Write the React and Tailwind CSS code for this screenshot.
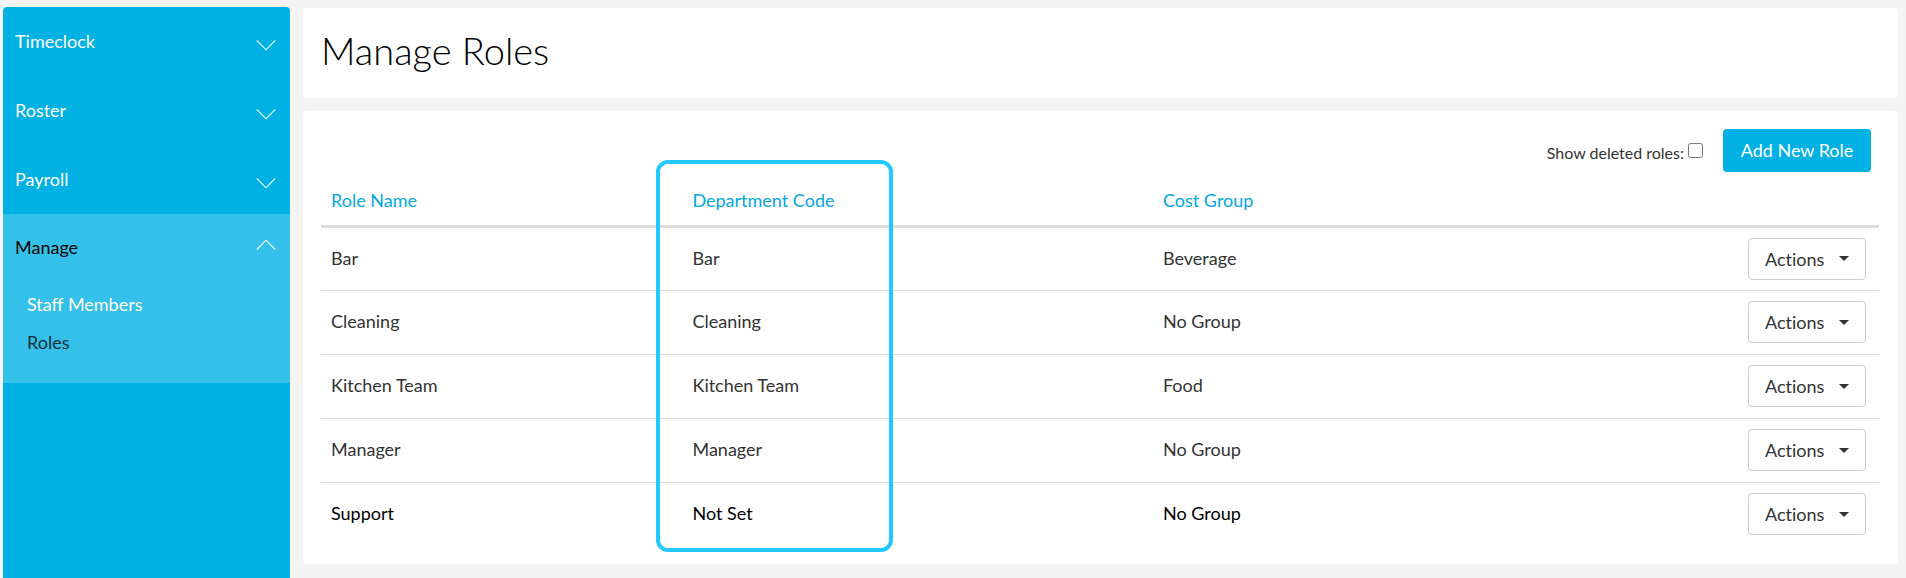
import { useState } from 'react'

const menu = ['Timeclock', 'Roster', 'Payroll']

const roles = [
  { name: 'Bar', code: 'Bar', group: 'Beverage' },
  { name: 'Cleaning', code: 'Cleaning', group: 'No Group' },
  { name: 'Kitchen Team', code: 'Kitchen Team', group: 'Food' },
  { name: 'Manager', code: 'Manager', group: 'No Group' },
  { name: 'Support', code: 'Not Set', group: 'No Group', isNew: true },
]

function Chevron({ up }) {
  return (
    <svg width="20" height="12" viewBox="0 0 20 12" fill="none" stroke="currentColor" strokeWidth="1.1" className="text-white">
      <path d={up ? 'M0.7 10.7L10 1.2l9.3 9.5' : 'M0.7 1.3L10 10.8l9.3-9.5'} />
    </svg>
  )
}

function Sidebar() {
  return (
    <nav className="w-[287px] shrink-0 rounded-t bg-[#02b1e4] text-lg text-white">
      {menu.map((item) => (
        <button key={item} type="button" className="flex h-[69px] w-full items-center justify-between pb-0.5 pl-3 pr-3.5 text-left">
          {item}
          <span className="pt-2">
            <Chevron />
          </span>
        </button>
      ))}

      {/* Open section */}
      <div className="bg-[#34c0e8] pb-[22px]">
        <button type="button" className="flex h-[69px] w-full items-center justify-between pb-1 pl-3 pr-3.5 text-left text-black">
          Manage
          <span className="pb-1">
            <Chevron up />
          </span>
        </button>
        <ul className="pl-6 pt-0.5 leading-[38px]">
          <li>
            <a href="#staff">Staff Members</a>
          </li>
          <li>
            <a href="#roles" className="text-[#12303c]">Roles</a>
          </li>
        </ul>
      </div>
    </nav>
  )
}

export default function App() {
  const [showDeleted, setShowDeleted] = useState(false)

  return (
    <div className="flex min-h-screen gap-[13px] bg-[#f4f4f4] pl-[3px] pr-2 pt-[7px] font-['Lato',sans-serif] text-[#333]">
      <Sidebar />

      <main className="min-w-0 flex-1 pt-px">
        {/* Header */}
        <header className="mb-[13px] h-[90px] rounded bg-white px-[18px] pt-3.5">
          <h1 className="text-[38px] leading-[56px] font-light text-black">Manage Roles</h1>
        </header>

        {/* Roles */}
        <section className="rounded bg-white pb-[18px] pl-[18px] pr-[19px] pt-[18px]">
          <div className="flex items-center justify-end gap-5 pr-2">
            <div className="flex items-center gap-1">
              <label htmlFor="show-deleted" className="pt-1 text-base">Show deleted roles:</label>
              <input
                id="show-deleted"
                type="checkbox"
                checked={showDeleted}
                onChange={(e) => setShowDeleted(e.target.checked)}
                className="size-[15px]"
              />
            </div>
            <button type="button" className="h-[43px] w-[148px] rounded bg-[#02b1e4] pb-0.5 text-lg text-white">
              Add New Role
            </button>
          </div>

          <div className="relative">
            <table className="w-full table-fixed text-left text-lg">
              <colgroup>
                <col className="w-[23.2%]" />
                <col className="w-[30.2%]" />
                <col />
                <col className="w-[150px]" />
              </colgroup>
              <thead>
                <tr className="h-[54px] border-b-3 border-[#ddd] text-[#02a8e0]">
                  <th className="px-2.5 pt-1 font-normal">Role Name</th>
                  <th className="px-2.5 pt-1 font-normal">Department Code</th>
                  <th className="px-2.5 pt-1 font-normal">Cost Group</th>
                  <th aria-label="Actions"></th>
                </tr>
              </thead>
              <tbody>
                {roles.map((role) => (
                  <tr key={role.name} className={role.isNew ? 'h-16 text-black' : 'h-16 border-b border-[#ddd]'}>
                    <td className="px-2.5 pb-0.5">{role.name}</td>
                    <td className="px-2.5 pb-0.5">{role.code}</td>
                    <td className="px-2.5 pb-0.5">{role.group}</td>
                    <td className="pr-[13px]">
                      <button type="button" className="ml-auto flex h-[42px] w-[118px] items-center justify-between rounded border border-[#ccc] bg-white px-4 text-[#333] [font-variant-ligatures:none]">
                        Actions
                        <svg width="10" height="5" viewBox="0 0 10 5" fill="currentColor">
                          <path d="M0 0h10L5 5z" />
                        </svg>
                      </button>
                    </td>
                  </tr>
                ))}
              </tbody>
            </table>

            {/* Column highlight */}
            <div className="pointer-events-none absolute -top-3 -bottom-1.5 left-[21.5%] w-[237px] rounded-xl border-4 border-[#22c8ff]" />
          </div>
        </section>
      </main>
    </div>
  )
}
